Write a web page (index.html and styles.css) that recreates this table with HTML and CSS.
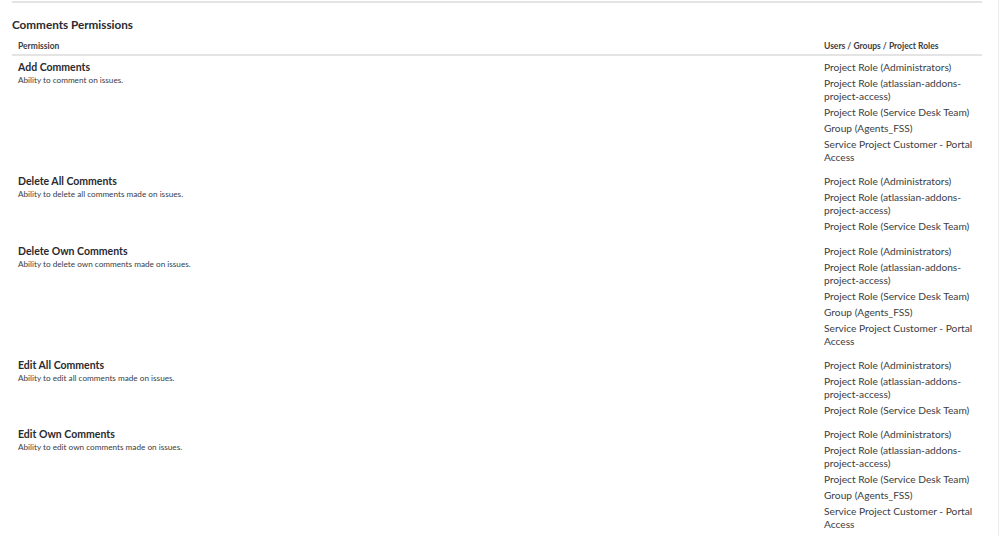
FILE: index.html
```html
<!DOCTYPE html>
<html lang="en">
<head>
    <meta charset="UTF-8">
    <meta name="viewport" content="width=device-width, initial-scale=1.0">
    <title>Comments Permissions</title>
    <link rel="stylesheet" href="styles.css">
</head>
<body>
    <div class="page">
        <div class="divider"></div>
        <h2 class="section-title">Comments Permissions</h2>

        <table class="perm-table">
            <thead>
                <tr>
                    <th class="col-perm">Permission</th>
                    <th class="col-users">Users / Groups / Project Roles</th>
                </tr>
            </thead>
            <tbody>
                <tr>
                    <td class="col-perm">
                        <div class="perm-name">Add Comments</div>
                        <div class="perm-desc">Ability to comment on issues.</div>
                    </td>
                    <td class="col-users">
                        <ul class="grantees">
                            <li>Project Role (Administrators)</li>
                            <li>Project Role (atlassian-addons-project-access)</li>
                            <li>Project Role (Service Desk Team)</li>
                            <li>Group (Agents_FSS)</li>
                            <li>Service Project Customer - Portal Access</li>
                        </ul>
                    </td>
                </tr>
                <tr>
                    <td class="col-perm">
                        <div class="perm-name">Delete All Comments</div>
                        <div class="perm-desc">Ability to delete all comments made on issues.</div>
                    </td>
                    <td class="col-users">
                        <ul class="grantees">
                            <li>Project Role (Administrators)</li>
                            <li>Project Role (atlassian-addons-project-access)</li>
                            <li>Project Role (Service Desk Team)</li>
                        </ul>
                    </td>
                </tr>
                <tr>
                    <td class="col-perm">
                        <div class="perm-name">Delete Own Comments</div>
                        <div class="perm-desc">Ability to delete own comments made on issues.</div>
                    </td>
                    <td class="col-users">
                        <ul class="grantees">
                            <li>Project Role (Administrators)</li>
                            <li>Project Role (atlassian-addons-project-access)</li>
                            <li>Project Role (Service Desk Team)</li>
                            <li>Group (Agents_FSS)</li>
                            <li>Service Project Customer - Portal Access</li>
                        </ul>
                    </td>
                </tr>
                <tr>
                    <td class="col-perm">
                        <div class="perm-name">Edit All Comments</div>
                        <div class="perm-desc">Ability to edit all comments made on issues.</div>
                    </td>
                    <td class="col-users">
                        <ul class="grantees">
                            <li>Project Role (Administrators)</li>
                            <li>Project Role (atlassian-addons-project-access)</li>
                            <li>Project Role (Service Desk Team)</li>
                        </ul>
                    </td>
                </tr>
                <tr>
                    <td class="col-perm">
                        <div class="perm-name">Edit Own Comments</div>
                        <div class="perm-desc">Ability to edit own comments made on issues.</div>
                    </td>
                    <td class="col-users">
                        <ul class="grantees">
                            <li>Project Role (Administrators)</li>
                            <li>Project Role (atlassian-addons-project-access)</li>
                            <li>Project Role (Service Desk Team)</li>
                            <li>Group (Agents_FSS)</li>
                            <li>Service Project Customer - Portal Access</li>
                        </ul>
                    </td>
                </tr>
            </tbody>
        </table>
    </div>
</body>
</html>
```

FILE: styles.css
```css
body {
    font-family: 'Lato', 'Noto Sans', sans-serif;
    margin: 0;
    padding: 0;
    background-color: #fff;
    color: #292a2e;
    border-right: 1px solid #ececec;
    min-height: 536px;
    box-sizing: border-box;
}

.page {
    padding: 1px 16px 0 12px;
}

.divider {
    height: 2px;
    background-color: #e4e4e4;
}

.section-title {
    font-size: 11.7px;
    font-weight: 700;
    margin: 14px 0 6px 0;
    line-height: 14px;
}

.perm-table {
    width: 100%;
    border-collapse: collapse;
    table-layout: fixed;
}

.perm-table th {
    font-size: 8.5px;
    font-weight: 700;
    text-align: left;
    padding: 3px 6px 2px 6px;
    line-height: 12px;
    border-bottom: 2px solid #e4e4e4;
    color: #3b3d42;
}

.perm-table td {
    vertical-align: top;
    padding: 5px 6px 3.25px 6px;
}

.perm-table .col-users {
    width: 158px;
    padding-right: 0;
}

.perm-name {
    font-size: 10.5px;
    font-weight: 700;
    line-height: 13px;
}

.perm-desc {
    font-size: 8.2px;
    line-height: 12px;
    color: #3b3d42;
}

.grantees {
    list-style: none;
    margin: 0;
    padding: 0;
}

.grantees li {
    font-size: 10.2px;
    line-height: 13px;
    margin-bottom: 3px;
    color: #3b3d42;
}
```
